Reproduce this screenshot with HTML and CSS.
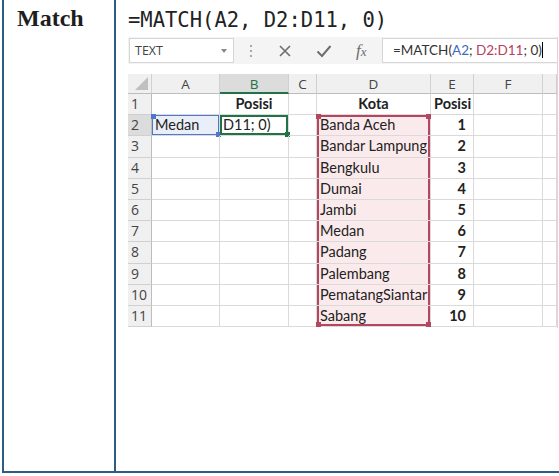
FILE: index.html
```html
<!DOCTYPE html>
<html>
<head>
    <title>Fungsi MATCH</title>
    <link rel="stylesheet" href="styles.css">
</head>
<body>
    <div class="func-row">
        <div class="term">Match</div>
        <div class="detail">
            <div class="syntax">=MATCH(A2, D2:D11, 0)</div>

            <div class="excel">
                <div class="formula-bar">
                    <div class="name-box">TEXT<span class="caret"></span></div>
                    <div class="grip"></div>
                    <div class="bar-icons">
                        <svg width="14" height="14" viewBox="0 0 14 14"><path d="M2 2 L12 12 M12 2 L2 12" stroke="#6d6d6d" stroke-width="1.6" fill="none"/></svg>
                        <svg width="16" height="14" viewBox="0 0 16 14"><path d="M1.5 7.5 L6 12 L14.5 2" stroke="#6d6d6d" stroke-width="2" fill="none"/></svg>
                        <span class="fx">f<i>x</i></span>
                    </div>
                    <div class="formula-input">=MATCH(<span class="ref-a">A2</span>; <span class="ref-d">D2:D11</span>; 0)<span class="cursor"></span></div>
                </div>

                <div class="grid">
                    <!-- header row -->
                    <div class="hd corner"><span class="tri"></span></div>
                    <div class="hd">A</div>
                    <div class="hd active-col">B</div>
                    <div class="hd">C</div>
                    <div class="hd">D</div>
                    <div class="hd">E</div>
                    <div class="hd">F</div>
                    <div class="hd"></div>

                    <!-- row 1 -->
                    <div class="rh">1</div>
                    <div class="c"></div>
                    <div class="c b center">Posisi</div>
                    <div class="c"></div>
                    <div class="c b center">Kota</div>
                    <div class="c b center">Posisi</div>
                    <div class="c"></div>
                    <div class="c"></div>

                    <!-- row 2 -->
                    <div class="rh active-row">2</div>
                    <div class="c ref-cell">Medan</div>
                    <div class="c edit-cell">D11; 0)</div>
                    <div class="c"></div>
                    <div class="c range top">Banda Aceh</div>
                    <div class="c b num">1</div>
                    <div class="c"></div>
                    <div class="c"></div>

                    <div class="rh">3</div>
                    <div class="c"></div><div class="c"></div><div class="c"></div>
                    <div class="c range">Bandar Lampung</div>
                    <div class="c b num">2</div>
                    <div class="c"></div><div class="c"></div>

                    <div class="rh">4</div>
                    <div class="c"></div><div class="c"></div><div class="c"></div>
                    <div class="c range">Bengkulu</div>
                    <div class="c b num">3</div>
                    <div class="c"></div><div class="c"></div>

                    <div class="rh">5</div>
                    <div class="c"></div><div class="c"></div><div class="c"></div>
                    <div class="c range">Dumai</div>
                    <div class="c b num">4</div>
                    <div class="c"></div><div class="c"></div>

                    <div class="rh">6</div>
                    <div class="c"></div><div class="c"></div><div class="c"></div>
                    <div class="c range">Jambi</div>
                    <div class="c b num">5</div>
                    <div class="c"></div><div class="c"></div>

                    <div class="rh">7</div>
                    <div class="c"></div><div class="c"></div><div class="c"></div>
                    <div class="c range">Medan</div>
                    <div class="c b num">6</div>
                    <div class="c"></div><div class="c"></div>

                    <div class="rh">8</div>
                    <div class="c"></div><div class="c"></div><div class="c"></div>
                    <div class="c range">Padang</div>
                    <div class="c b num">7</div>
                    <div class="c"></div><div class="c"></div>

                    <div class="rh">9</div>
                    <div class="c"></div><div class="c"></div><div class="c"></div>
                    <div class="c range">Palembang</div>
                    <div class="c b num">8</div>
                    <div class="c"></div><div class="c"></div>

                    <div class="rh">10</div>
                    <div class="c"></div><div class="c"></div><div class="c"></div>
                    <div class="c range">PematangSiantar</div>
                    <div class="c b num">9</div>
                    <div class="c"></div><div class="c"></div>

                    <div class="rh">11</div>
                    <div class="c"></div><div class="c"></div><div class="c"></div>
                    <div class="c range bottom">Sabang</div>
                    <div class="c b num">10</div>
                    <div class="c"></div><div class="c"></div>
                </div>
            </div>
        </div>
    </div>
</body>
</html>
```

FILE: styles.css
```css
body {
    margin: 0;
    padding: 0 0 0 2px;
    background: #fff;
    font-family: "Liberation Sans", Arial, sans-serif;
}

/* table row: term on the left, explanation on the right */
.func-row {
    display: grid;
    grid-template-columns: 112px 1fr;
    height: 471px;
    border-left: 2px solid #2d5d87;
    border-bottom: 2px solid #2d5d87;
}

.term {
    border-right: 2px solid #2d5d87;
    padding: 3px 0 0 13px;
    font-family: "Liberation Serif", "Times New Roman", serif;
    font-weight: bold;
    font-size: 24px;
    line-height: 30px;
    color: #1e1e1e;
}

.detail {
    padding-left: 12px;
}

.syntax {
    height: 37px;
    box-sizing: border-box;
    padding-top: 6px;
    font-family: "DejaVu Sans Mono", "Liberation Mono", monospace;
    font-size: 20.5px;
    line-height: 28px;
    color: #222;
}

/* excel window */
.excel {
    width: 429px;
    border-right: 1px solid #d8d8d8;
    height: 291px;
}

.formula-bar {
    display: flex;
    align-items: center;
    height: 27px;
    background: #f4f4f4;
    padding-left: 1px;
}

.name-box {
    width: 105px;
    height: 25px;
    box-sizing: border-box;
    background: #fff;
    border: 1px solid #d6d6d6;
    font-family: "Open Sans", sans-serif;
    font-size: 12.5px;
    line-height: 23px;
    color: #444;
    padding-left: 5px;
    position: relative;
}

.caret {
    position: absolute;
    right: 6px;
    top: 10px;
    border-left: 3px solid transparent;
    border-right: 3px solid transparent;
    border-top: 4px solid #888;
}

.grip {
    width: 2px;
    height: 12px;
    margin-left: 16px;
    background: repeating-linear-gradient(#a8a8a8 0 2px, transparent 2px 5px);
}

.bar-icons {
    display: flex;
    align-items: center;
    gap: 24px;
    margin-left: 26px;
    width: 104px;
}

.fx {
    font-family: "Liberation Serif", serif;
    font-style: italic;
    font-size: 17px;
    color: #6d6d6d;
}

.fx i {
    font-size: 13px;
}

.formula-input {
    flex: 1;
    height: 25px;
    box-sizing: border-box;
    background: #fff;
    border: 1px solid #d6d6d6;
    border-right: none;
    padding-left: 10px;
    font-family: Lato, sans-serif;
    font-size: 13.5px;
    line-height: 23px;
    color: #333;
    white-space: nowrap;
    overflow: hidden;
}

.ref-a { color: #3f6ab8; }
.ref-d { color: #b8405e; }

.cursor {
    display: inline-block;
    width: 1px;
    height: 16px;
    background: #000;
    vertical-align: -3px;
}

/* worksheet */
.grid {
    display: grid;
    grid-template-columns: 24px 68px 69px 28px 114px 43px 69px 14px;
    grid-template-rows: 20px repeat(11, 21.2px);
    margin-top: 10px;
    font-family: Lato, sans-serif;
    font-size: 14.5px;
    color: #222;
}

.hd {
    background: #f0f0f0;
    border-right: 1px solid #d0d0d0;
    border-bottom: 1px solid #bdbdbd;
    text-align: center;
    font-family: "Open Sans", sans-serif;
    font-size: 13.5px;
    line-height: 20px;
    color: #444;
    box-sizing: border-box;
}

.corner {
    position: relative;
}

.tri {
    position: absolute;
    right: 3px;
    bottom: 3px;
    border-left: 13px solid transparent;
    border-bottom: 13px solid #c0c0c0;
}

.active-col {
    background: #dcdcdc;
    border-bottom: 2px solid #217346;
    color: #217346;
}

.rh {
    background: #f0f0f0;
    border-right: 1px solid #bdbdbd;
    border-bottom: 1px solid #d0d0d0;
    font-family: "Open Sans", sans-serif;
    font-size: 14px;
    line-height: 20px;
    color: #444;
    padding-left: 3px;
    box-sizing: border-box;
}

.active-row {
    background: #dcdcdc;
}

.c {
    border-right: 1px solid #dadada;
    border-bottom: 1px solid #dadada;
    padding: 0 3px;
    line-height: 20px;
    white-space: nowrap;
    box-sizing: border-box;
    position: relative;
}

.b { font-weight: bold; }
.center { text-align: center; }
.num { text-align: right; padding-right: 7px; }

.ref-cell {
    background: #e9eef8;
    box-shadow: inset 0 0 0 1px #4f78c8;
}

.edit-cell {
    box-shadow: inset 0 0 0 2px #217346;
}

.range {
    background: #fbeaec;
    box-shadow: inset 2px 0 0 #b4475f, inset -2px 0 0 #b4475f;
}

.range.top {
    box-shadow: inset 2px 0 0 #b4475f, inset -2px 0 0 #b4475f, inset 0 2px 0 #b4475f;
}

.range.bottom {
    box-shadow: inset 2px 0 0 #b4475f, inset -2px 0 0 #b4475f, inset 0 -2px 0 #b4475f;
}

/* selection handles on the range corners */
.range.top::before,
.range.top::after,
.range.bottom::before,
.range.bottom::after,
.ref-cell::before,
.ref-cell::after,
.edit-cell::after {
    content: "";
    position: absolute;
    width: 5px;
    height: 5px;
    background: #b4475f;
}

.range.top::before { left: -1px; top: -1px; }
.range.top::after { right: -1px; top: -1px; }
.range.bottom::before { left: -1px; bottom: -1px; }
.range.bottom::after { right: -1px; bottom: -1px; }

.ref-cell::before { left: -1px; top: -1px; background: #4f78c8; }
.ref-cell::after { right: -2px; bottom: -2px; background: #4f78c8; }
.edit-cell::after { right: -2px; bottom: -2px; background: #217346; }
```
